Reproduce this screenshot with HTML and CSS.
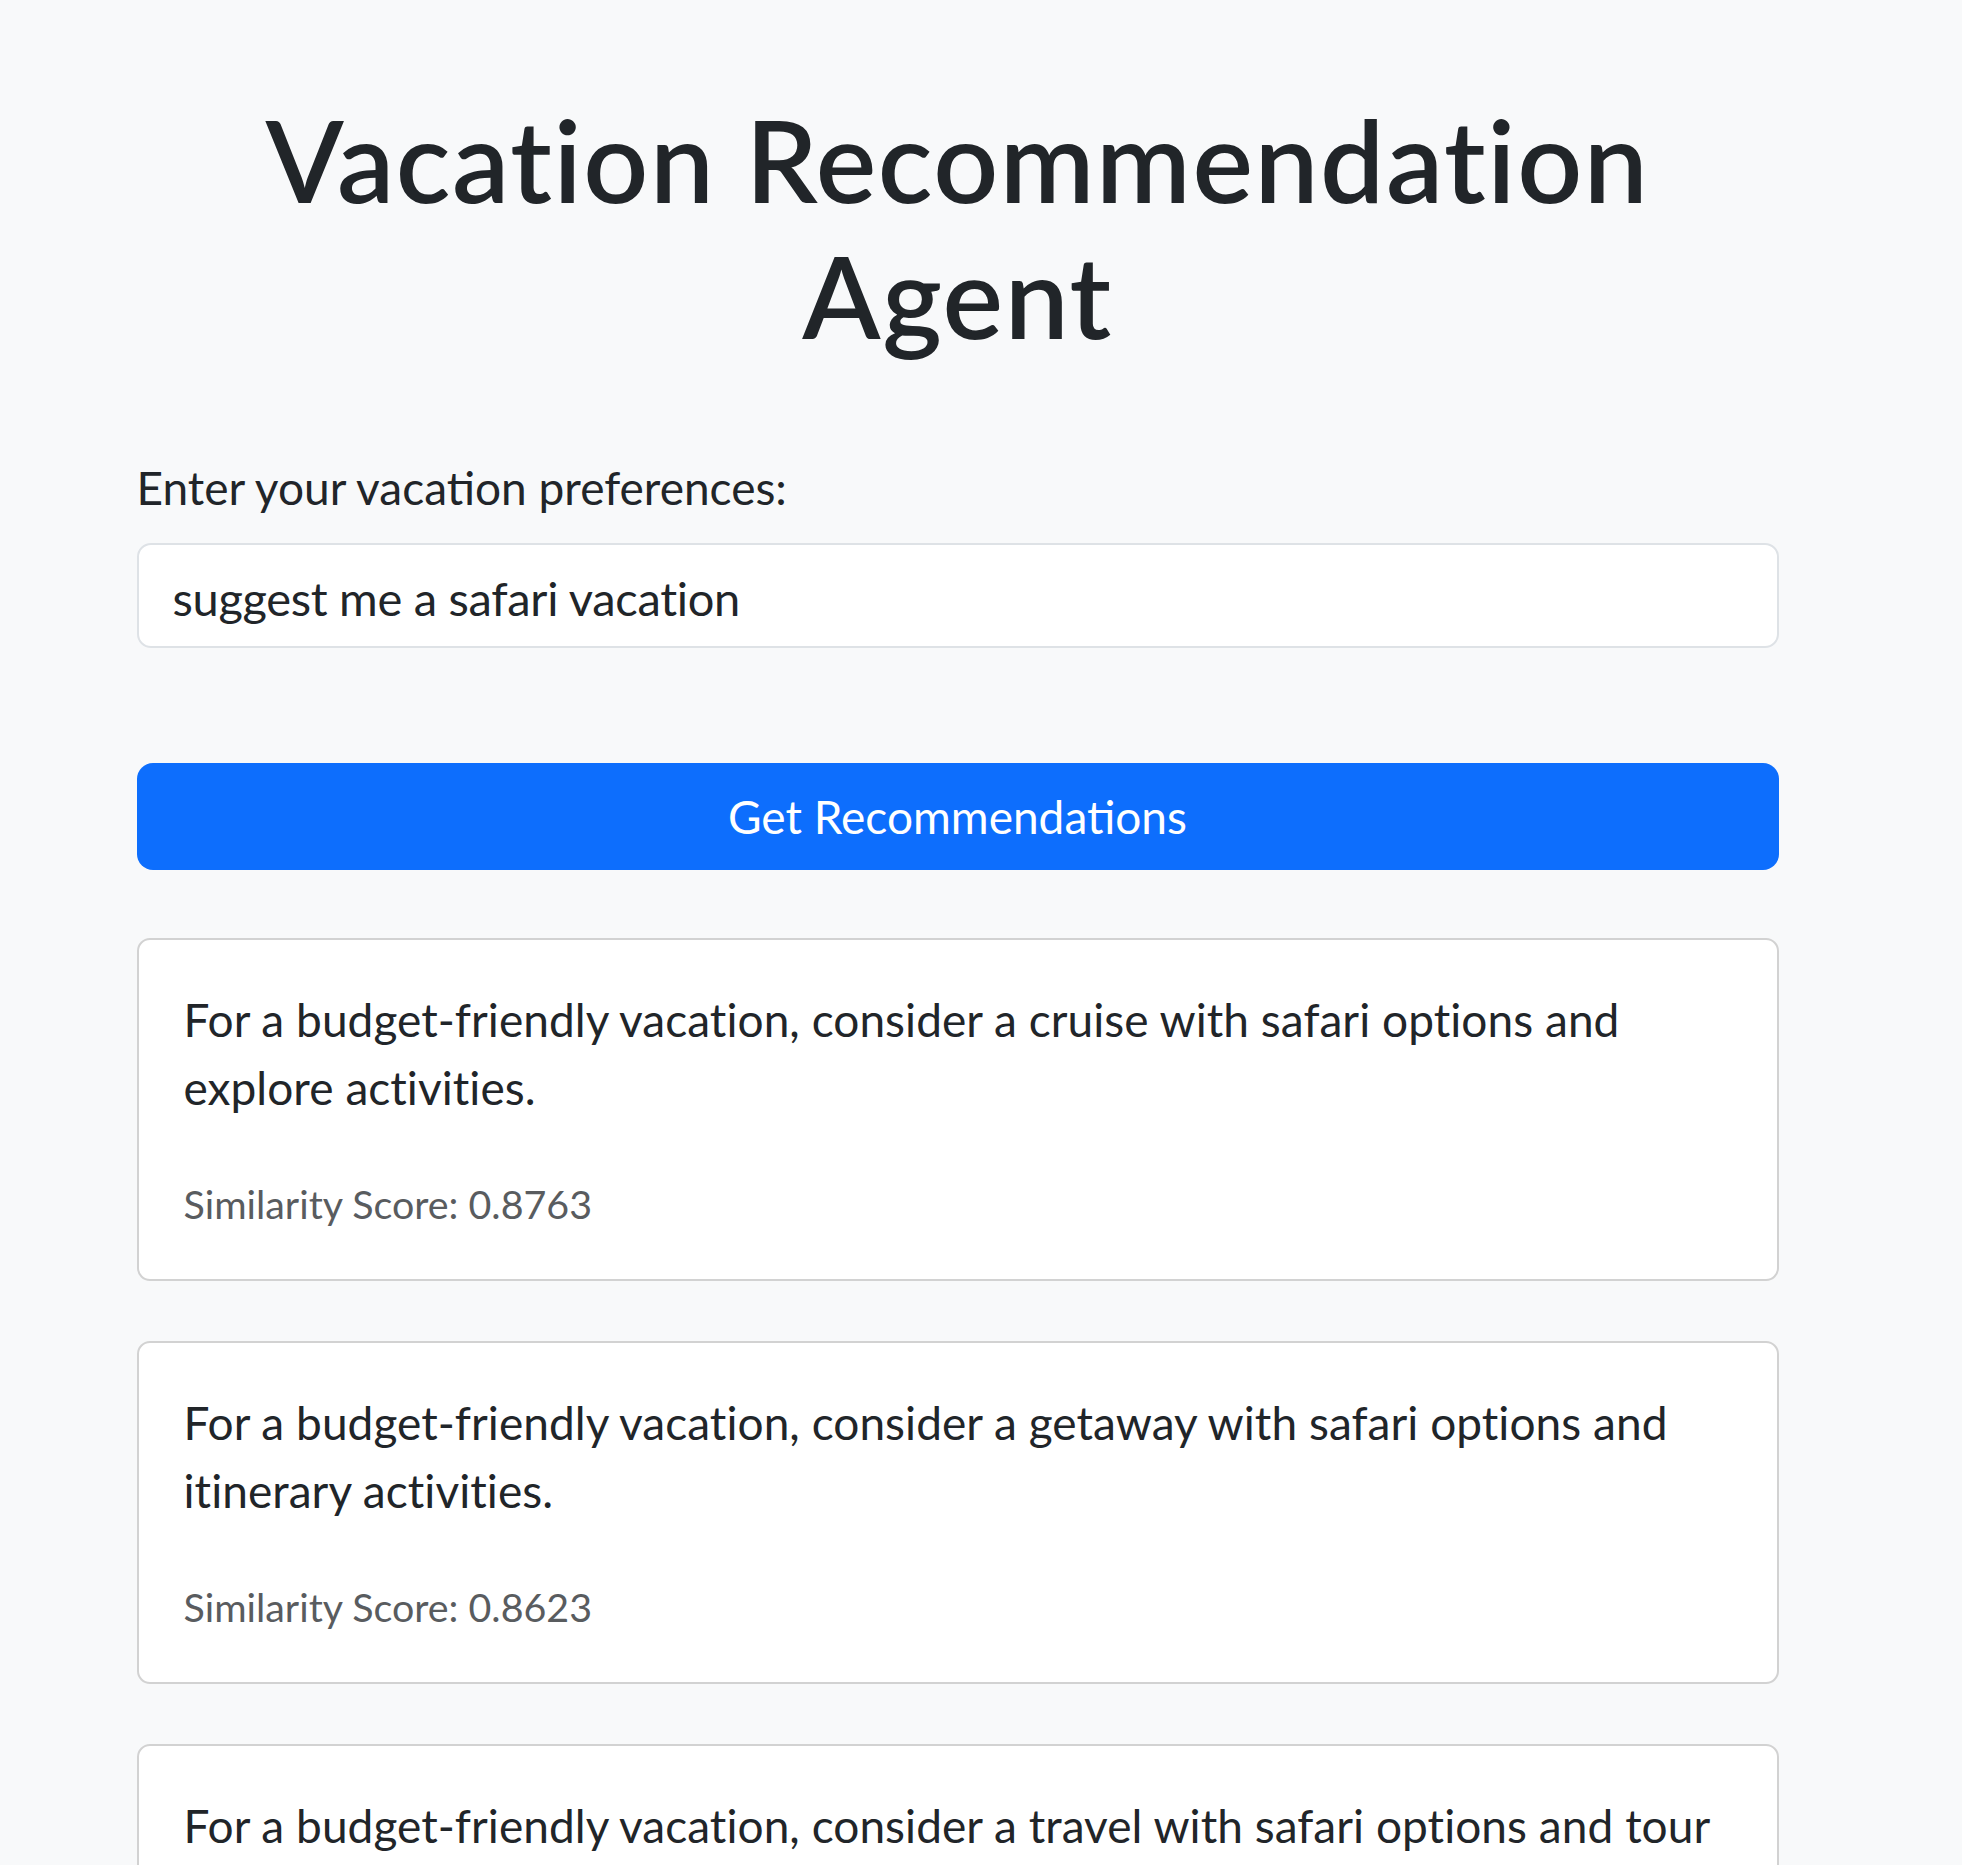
FILE: index.html
```html
<!DOCTYPE html>
<html lang="en">
<head>
<meta charset="utf-8">
<title>Vacation Recommendation Agent</title>
<link rel="stylesheet" href="styles.css">
</head>
<body>
<div class="page">
  <div class="container">
    <h1 class="title">Vacation Recommendation Agent</h1>
    <form class="query-form">
      <label class="form-label" for="prefs">Enter your vacation preferences:</label>
      <input class="form-control" id="prefs" type="text" value="suggest me a safari vacation">
      <button class="btn-primary" type="button">Get Recommendations</button>
    </form>
    <div class="results">
      <div class="card">
        <p class="card-text">For a budget-friendly vacation, consider a cruise with safari options and explore activities.</p>
        <p class="score">Similarity Score: 0.8763</p>
      </div>
      <div class="card">
        <p class="card-text">For a budget-friendly vacation, consider a getaway with safari options and itinerary activities.</p>
        <p class="score">Similarity Score: 0.8623</p>
      </div>
      <div class="card">
        <p class="card-text">For a budget-friendly vacation, consider a travel with safari options and tour activities.</p>
        <p class="score">Similarity Score: 0.8512</p>
      </div>
    </div>
  </div>
</div>
</body>
</html>
```

FILE: styles.css
```css
html {
  overflow: hidden;
}

body {
  margin: 0;
  background: #f8f9fa;
  color: #212529;
  font-family: "Lato", "Noto Sans", sans-serif;
  font-size: 46px;
  line-height: 1.5;
}

.page {
  width: 1915px;
  padding-top: 91px;
}

.container {
  width: 1642px;
  margin: 0 auto;
}

.title {
  margin: 0;
  font-size: 114px;
  font-weight: 600;
  line-height: 136px;
  letter-spacing: 1.6px;
  text-align: center;
}

.query-form {
  display: flex;
  flex-direction: column;
  margin-top: 90px;
}

.form-label {
  display: block;
  line-height: 69px;
  margin-bottom: 21px;
}

.form-control {
  box-sizing: border-box;
  height: 105px;
  padding: 4px 34px 0;
  border: 2px solid #dee2e6;
  border-radius: 14px;
  background: #fff;
  color: #212529;
  font-family: inherit;
  font-size: 47px;
  letter-spacing: -0.3px;
  outline: none;
}

.btn-primary {
  box-sizing: border-box;
  height: 107px;
  margin-top: 115px;
  border: 0;
  border-radius: 16px;
  background: #0d6efd;
  color: #fff;
  font-family: inherit;
  font-size: 46px;
  cursor: pointer;
}

.results {
  display: flex;
  flex-direction: column;
  gap: 60px;
  margin-top: 68px;
}

.card {
  box-sizing: border-box;
  height: 343px;
  padding: 46px 45px 44px;
  border: 2px solid #d2d2d2;
  border-radius: 13px;
  background: #fff;
}

.card-text {
  margin: 0 0 53px;
  font-size: 46px;
  line-height: 67.7px;
  letter-spacing: 0.05px;
}

.score {
  margin: 0;
  font-size: 39.4px;
  line-height: 60px;
  color: #595c5f;
}
```
